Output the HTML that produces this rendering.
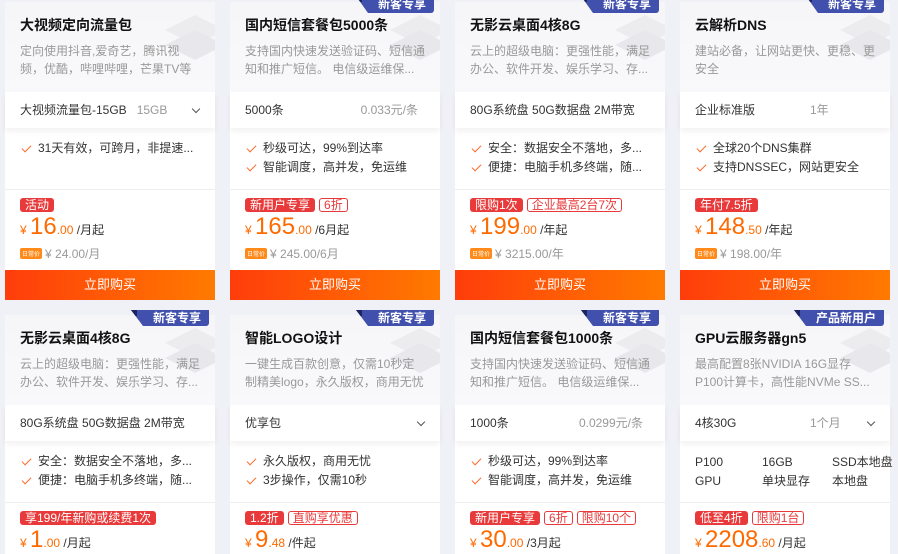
<!DOCTYPE html>
<html style="width:898px;height:554px;overflow:hidden"><head><meta charset="utf-8"><style>
*{margin:0;padding:0;box-sizing:border-box}
body{width:898px;height:554px;overflow:hidden;background:#f0f1f6;font-family:"Liberation Sans","Noto Sans CJK SC",sans-serif;position:relative;color:#333}
.card{position:absolute;width:210px;height:298px;background:#fff}
.r2{height:239px;overflow:visible}
.hd{position:absolute;left:0;top:0;width:210px;height:90px;background:linear-gradient(180deg,#f6f6f8,#f9f9fb);overflow:hidden}
.deco{position:absolute;right:-10px;top:8px;width:70px;height:60px}
.t{position:absolute;left:15px;top:13px;font-size:14px;font-weight:bold;color:#111}
.d{position:absolute;left:15px;top:40px;width:192px;font-size:12px;line-height:18px;color:#999;height:36px;overflow:hidden;white-space:nowrap}
.sel{position:absolute;left:0;top:90px;width:210px;height:36px;background:#fff;box-shadow:0 3px 6px rgba(0,0,0,.06);font-size:12px;line-height:36px;padding-left:15px;color:#333}
.sel .g{color:#999}
.sel .r{position:absolute;right:22px;top:0;color:#999}
.chev{position:absolute;right:16px;top:14px;width:6px;height:6px;border-right:1px solid #555;border-bottom:1px solid #555;transform:rotate(45deg)}
.f{position:absolute;left:15px;top:137px;font-size:12px;line-height:19px;color:#333}
.f div{position:relative;padding-left:18px}
.f div:before{content:"";position:absolute;left:2px;top:6px;width:8px;height:4px;border-left:1.5px solid #ff6a2a;border-bottom:1.5px solid #ff6a2a;transform:rotate(-45deg)}
.line{position:absolute;left:0;top:187px;width:210px;height:1px;background:#eee}
.tags{position:absolute;left:15px;top:196px;font-size:12px;line-height:14px;white-space:nowrap}
.tg{display:inline-block;background:#e83a3a;color:#fff;border-radius:3px;padding:0 5px;margin-right:4px;height:14px}
.to{display:inline-block;border:1px solid #e83a3a;color:#e83a3a;border-radius:3px;padding:0 4px;margin-right:4px;height:14px;line-height:12px}
.p{position:absolute;left:15px;top:211px;color:#ff6a00;white-space:nowrap}
.p .y{font-size:12px}.p .b{font-size:24px}.p .s{font-size:12px}.p .u{font-size:12px;color:#333}
.dp{position:absolute;left:15px;top:243px;font-size:12px;color:#999;white-space:nowrap}
.dp i{display:inline-block;font-style:normal;background:#ff8a1a;color:#fff;font-size:6px;border-radius:2px;padding:1px 2px;vertical-align:2px;margin-right:3px}
.btn{position:absolute;left:0;top:268px;width:210px;height:30px;background:linear-gradient(90deg,#ff3d0b,#ff7a00);color:#fff;font-size:13px;line-height:30px;text-align:center}
.bd{position:absolute;right:6px;top:-6px;height:17px;background:#4150ad;color:#fff;font-size:12px;font-weight:bold;line-height:17px;padding:0 8px 0 22px;clip-path:polygon(0 0,100% 0,100% 100%,12px 100%);border-radius:0 0 3px 0}
.bd:before{content:"";position:absolute;left:0;top:0;width:6px;height:6px;background:#1d2460}
.r2 .bd{top:-5px;height:16px;line-height:16px}
.spec{position:absolute;top:138px;font-size:12px;line-height:19px;color:#333}
</style></head><body>

<div class="card" style="left:5px;top:2px">
<div class="hd"><svg class="deco" viewBox="0 0 70 60"><path d="M10 20 L40 5 L70 20 L40 35Z" fill="#ececef"/><path d="M10 35 L40 20 L70 35 L40 50Z" fill="#e8e8ec"/></svg></div>
<div class="t">大视频定向流量包</div>
<div class="d">定向使用抖音,爱奇艺，腾讯视<br>频，优酷，哔哩哔哩，芒果TV等</div>
<div class="sel">大视频流量包-15GB&nbsp;&nbsp; <span class="g">15GB</span><span class="chev"></span></div>
<div class="f"><div>31天有效，可跨月，非提速...</div></div>
<div class="line"></div>
<div class="tags"><span class="tg">活动</span></div>
<div class="p"><span class="y">¥ </span><span class="b">16</span><span class="s">.00</span><span class="u"> /月起</span></div>
<div class="dp"><i>日常价</i>¥ 24.00/月</div>
<div class="btn">立即购买</div>
</div>

<div class="card" style="left:230px;top:2px">
<div class="hd"><svg class="deco" viewBox="0 0 70 60"><path d="M10 20 L40 5 L70 20 L40 35Z" fill="#ececef"/><path d="M10 35 L40 20 L70 35 L40 50Z" fill="#e8e8ec"/></svg></div>
<div class="bd">新客专享</div>
<div class="t">国内短信套餐包5000条</div>
<div class="d">支持国内快速发送验证码、短信通<br>知和推广短信。 电信级运维保...</div>
<div class="sel">5000条<span class="r">0.033元/条</span></div>
<div class="f"><div>秒级可达，99%到达率</div><div>智能调度，高并发，免运维</div></div>
<div class="line"></div>
<div class="tags"><span class="tg">新用户专享</span><span class="to">6折</span></div>
<div class="p"><span class="y">¥ </span><span class="b">165</span><span class="s">.00</span><span class="u"> /6月起</span></div>
<div class="dp"><i>日常价</i>¥ 245.00/6月</div>
<div class="btn">立即购买</div>
</div>

<div class="card" style="left:455px;top:2px">
<div class="hd"><svg class="deco" viewBox="0 0 70 60"><path d="M10 20 L40 5 L70 20 L40 35Z" fill="#ececef"/><path d="M10 35 L40 20 L70 35 L40 50Z" fill="#e8e8ec"/></svg></div>
<div class="bd">新客专享</div>
<div class="t">无影云桌面4核8G</div>
<div class="d">云上的超级电脑：更强性能，满足<br>办公、软件开发、娱乐学习、存...</div>
<div class="sel">80G系统盘 50G数据盘 2M带宽</div>
<div class="f"><div>安全：数据安全不落地，多...</div><div>便捷：电脑手机多终端，随...</div></div>
<div class="line"></div>
<div class="tags"><span class="tg">限购1次</span><span class="to">企业最高2台7次</span></div>
<div class="p"><span class="y">¥ </span><span class="b">199</span><span class="s">.00</span><span class="u"> /年起</span></div>
<div class="dp"><i>日常价</i>¥ 3215.00/年</div>
<div class="btn">立即购买</div>
</div>

<div class="card" style="left:680px;top:2px">
<div class="hd"><svg class="deco" viewBox="0 0 70 60"><path d="M10 20 L40 5 L70 20 L40 35Z" fill="#ececef"/><path d="M10 35 L40 20 L70 35 L40 50Z" fill="#e8e8ec"/></svg></div>
<div class="bd">新客专享</div>
<div class="t">云解析DNS</div>
<div class="d">建站必备，让网站更快、更稳、更<br>安全</div>
<div class="sel">企业标准版<span class="g" style="position:absolute;left:130px">1年</span></div>
<div class="f"><div>全球20个DNS集群</div><div>支持DNSSEC，网站更安全</div></div>
<div class="line"></div>
<div class="tags"><span class="tg">年付7.5折</span></div>
<div class="p"><span class="y">¥ </span><span class="b">148</span><span class="s">.50</span><span class="u"> /年起</span></div>
<div class="dp"><i>日常价</i>¥ 198.00/年</div>
<div class="btn">立即购买</div>
</div>

<div class="card r2" style="left:5px;top:315px">
<div class="hd"><svg class="deco" viewBox="0 0 70 60"><path d="M10 20 L40 5 L70 20 L40 35Z" fill="#ececef"/><path d="M10 35 L40 20 L70 35 L40 50Z" fill="#e8e8ec"/></svg></div>
<div class="bd">新客专享</div>
<div class="t">无影云桌面4核8G</div>
<div class="d">云上的超级电脑：更强性能，满足<br>办公、软件开发、娱乐学习、存...</div>
<div class="sel">80G系统盘 50G数据盘 2M带宽</div>
<div class="f"><div>安全：数据安全不落地，多...</div><div>便捷：电脑手机多终端，随...</div></div>
<div class="line"></div>
<div class="tags"><span class="tg">享199/年新购或续费1次</span></div>
<div class="p"><span class="y">¥ </span><span class="b">1</span><span class="s">.00</span><span class="u"> /月起</span></div>
</div>

<div class="card r2" style="left:230px;top:315px">
<div class="hd"><svg class="deco" viewBox="0 0 70 60"><path d="M10 20 L40 5 L70 20 L40 35Z" fill="#ececef"/><path d="M10 35 L40 20 L70 35 L40 50Z" fill="#e8e8ec"/></svg></div>
<div class="bd">新客专享</div>
<div class="t">智能LOGO设计</div>
<div class="d">一键生成百款创意，仅需10秒定<br>制精美logo，永久版权，商用无忧</div>
<div class="sel">优享包<span class="chev"></span></div>
<div class="f"><div>永久版权，商用无忧</div><div>3步操作，仅需10秒</div></div>
<div class="line"></div>
<div class="tags"><span class="tg">1.2折</span><span class="to">直购享优惠</span></div>
<div class="p"><span class="y">¥ </span><span class="b">9</span><span class="s">.48</span><span class="u"> /件起</span></div>
</div>

<div class="card r2" style="left:455px;top:315px">
<div class="hd"><svg class="deco" viewBox="0 0 70 60"><path d="M10 20 L40 5 L70 20 L40 35Z" fill="#ececef"/><path d="M10 35 L40 20 L70 35 L40 50Z" fill="#e8e8ec"/></svg></div>
<div class="bd">新客专享</div>
<div class="t">国内短信套餐包1000条</div>
<div class="d">支持国内快速发送验证码、短信通<br>知和推广短信。 电信级运维保...</div>
<div class="sel">1000条<span class="r">0.0299元/条</span></div>
<div class="f"><div>秒级可达，99%到达率</div><div>智能调度，高并发，免运维</div></div>
<div class="line"></div>
<div class="tags"><span class="tg">新用户专享</span><span class="to">6折</span><span class="to">限购10个</span></div>
<div class="p"><span class="y">¥ </span><span class="b">30</span><span class="s">.00</span><span class="u"> /3月起</span></div>
</div>

<div class="card r2" style="left:680px;top:315px">
<div class="hd"><svg class="deco" viewBox="0 0 70 60"><path d="M10 20 L40 5 L70 20 L40 35Z" fill="#ececef"/><path d="M10 35 L40 20 L70 35 L40 50Z" fill="#e8e8ec"/></svg></div>
<div class="bd">产品新用户</div>
<div class="t">GPU云服务器gn5</div>
<div class="d">最高配置8张NVIDIA 16G显存<br>P100计算卡，高性能NVMe SS...</div>
<div class="sel">4核30G<span class="g" style="position:absolute;left:130px">1个月</span><span class="chev"></span></div>
<div class="spec" style="left:15px"><div>P100</div><div>GPU</div></div>
<div class="spec" style="left:82px"><div>16GB</div><div>单块显存</div></div>
<div class="spec" style="left:152px;white-space:nowrap"><div>SSD本地盘</div><div>本地盘</div></div>
<div class="line"></div>
<div class="tags"><span class="tg">低至4折</span><span class="to">限购1台</span></div>
<div class="p"><span class="y">¥ </span><span class="b">2208</span><span class="s">.60</span><span class="u"> /月起</span></div>
</div>

</body></html>
